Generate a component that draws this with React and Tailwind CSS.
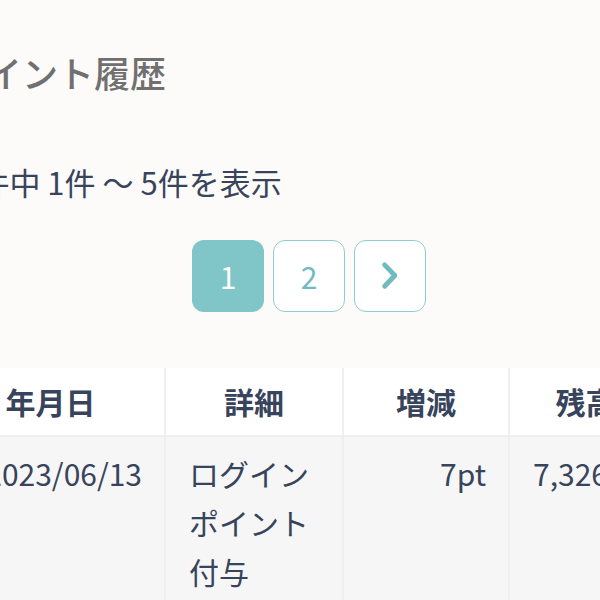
import React from 'react';

const font = { fontFamily: '"Noto Sans CJK JP", "Noto Sans", sans-serif' };

const rows = [
    { date: '2023/06/13', detail: ['ログイン', 'ポイント', '付与'], diff: '7pt', balance: '7,326pt' },
];

const App = () => {
    return (
        <div className="w-[600px] h-[600px] overflow-hidden bg-[#fcfbf9]" style={font}>
            <div className="pt-[48px]">
                <h2 className="-ml-[50px] text-[36px] leading-[48px] font-medium text-[#707070] whitespace-nowrap">ポイント履歴</h2>

                <p className="-ml-[56px] mt-[64px] text-[31px] leading-[44px] text-[#38445c] whitespace-nowrap">
                    10件中 1件 〜 5件を表示
                </p>

                <div className="mt-[36px] pl-[192px] flex gap-[9px]">
                    <button className="w-[72px] h-[72px] rounded-[12px] bg-[#80c5c8] text-white text-[30px] flex items-center justify-center">
                        1
                    </button>
                    <button className="w-[72px] h-[72px] rounded-[12px] border-[1.5px] border-[#8ecdd0] bg-white text-[#6fbbbf] text-[30px] flex items-center justify-center">
                        2
                    </button>
                    <button className="w-[72px] h-[72px] rounded-[12px] border-[1.5px] border-[#8ecdd0] bg-white flex items-center justify-center">
                        <svg width="72" height="72" viewBox="0 0 72 72" fill="none">
                            <path d="M30.5 24.5 L41 35.5 L30.5 46.5" stroke="#6fbbbf" strokeWidth="5" strokeLinecap="round" strokeLinejoin="round" />
                        </svg>
                    </button>
                </div>

                <table className="mt-[56px] -ml-[63px] w-[724px] max-w-none table-fixed border-collapse text-[30px] text-[#38445c]">
                    <colgroup>
                        <col className="w-[228px]" />
                        <col className="w-[178px]" />
                        <col className="w-[166px]" />
                        <col className="w-[152px]" />
                    </colgroup>
                    <thead>
                        <tr className="bg-white">
                            <th className="h-[68px] font-bold text-center border-r-2 border-[#efefef]">年月日</th>
                            <th className="h-[68px] font-bold text-center border-r-2 border-[#efefef]">詳細</th>
                            <th className="h-[68px] font-bold text-center border-r-2 border-[#efefef]">増減</th>
                            <th className="h-[68px] font-bold text-center whitespace-nowrap">残高</th>
                        </tr>
                    </thead>
                    <tbody>
                        {rows.map((r) => (
                            <tr key={r.date} className="bg-[#f6f6f7] border-t-2 border-[#efefef] align-top">
                                <td className="px-[22px] pt-[12px] pb-[20px] leading-[49px] text-right border-r-2 border-[#efefef] whitespace-nowrap">{r.date}</td>
                                <td className="px-[23px] pt-[12px] pb-[20px] leading-[49px] text-left border-r-2 border-[#efefef]">
                                    {r.detail.map((line) => (
                                        <div key={line}>{line}</div>
                                    ))}
                                </td>
                                <td className="px-[22px] pt-[12px] pb-[20px] leading-[49px] text-right border-r-2 border-[#efefef]">{r.diff}</td>
                                <td className="px-[23px] pt-[12px] pb-[20px] leading-[49px] text-left whitespace-nowrap">{r.balance}</td>
                            </tr>
                        ))}
                    </tbody>
                </table>
            </div>
        </div>
    );
};

export default App;
